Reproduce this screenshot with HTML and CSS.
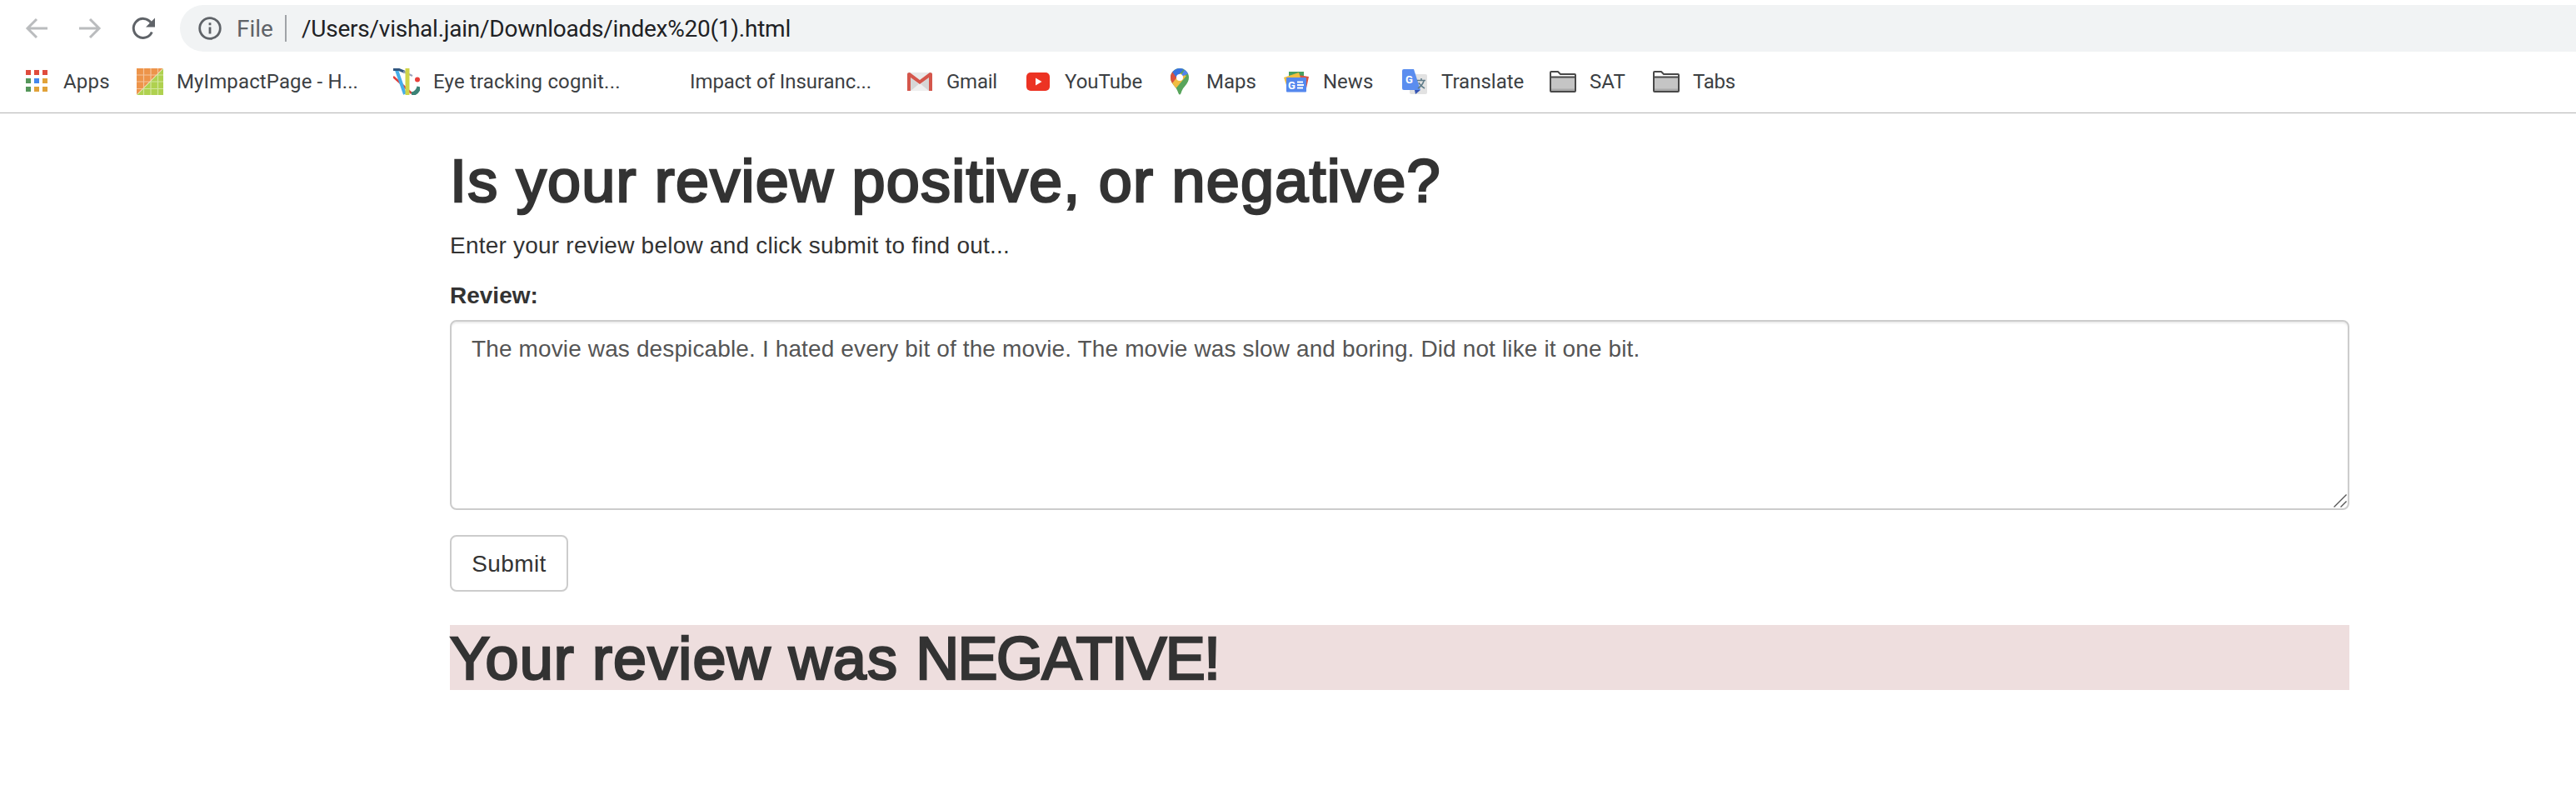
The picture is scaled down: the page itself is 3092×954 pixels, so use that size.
FILE: index.html
```html
<!DOCTYPE html>
<html lang="en">
<head>
<meta charset="utf-8">
<title>Review sentiment</title>
<link rel="stylesheet" href="styles.css">
</head>
<body>
<header class="browser">
  <div class="toolbar">
    <nav class="nav-icons">
      <svg class="nav-icon dim" viewBox="0 0 32 32"><path d="M29 16H5M16 5L5 16l11 11"/></svg>
      <svg class="nav-icon dim" viewBox="0 0 32 32"><path d="M3 16h24M16 5l11 11-11 11"/></svg>
      <svg class="nav-icon" viewBox="0 0 32 32"><path d="M26.300 20.500A11.500 11.500 0 1 1 25 9"/><path class="solid" d="M30 3.500v11H19z"/></svg>
    </nav>
    <div class="omnibox">
      <svg class="info" viewBox="0 0 28 28"><circle cx="14" cy="14" r="12.300"/><path d="M14 12.500v8M14 7.300v3"/></svg>
      <span class="scheme">File</span>
      <span class="divider"></span>
      <span class="url">/Users/vishal.jain/Downloads/index%20(1).html</span>
    </div>
  </div>
  <div class="bookmarks">
    <a class="bookmark"><svg class="icon" viewBox="0 0 32 32"><path fill="#df4b3d" d="M3 2h6v6H3zM13 2h6v6h-6zM23 2h6v6h-6z"/><path fill="#55965a" d="M3 12h6v6H3zM3 22h6v6H3z"/><path fill="#4387ed" d="M13 12h6v6h-6z"/><path fill="#e1a239" d="M23 12h6v6h-6zM13 22h6v6h-6zM23 22h6v6h-6z"/></svg><span class="label apps">Apps</span></a>
    <a class="bookmark"><svg class="icon" viewBox="0 0 32 32"><path fill="#ed944a" d="M0 0h32L0 32z"/><path fill="#afd14f" d="M32 0v32H0z"/><path stroke="#fff" stroke-opacity=".45" stroke-width="1.200" d="M8.500 0v32M17 0v32M25.500 0v32M0 8h32M0 16h32M0 24.500h32M32 0L0 32"/></svg><span class="label impact">MyImpactPage - H...</span></a>
    <a class="bookmark"><svg class="icon" viewBox="0 0 32 32" fill="none"><path stroke="#e03d38" stroke-width="2.500" d="M0 10l9 8 13 12"/><path stroke="#47aee8" stroke-width="4" d="M4 2l10 29"/><path stroke="#315780" stroke-width="3" d="M0 1.500h7l7 3"/><path stroke="#9aa3bb" stroke-width="2" d="M12 4l11 5"/><path stroke="#cfd448" stroke-width="5" d="M17 0v32"/><circle cx="29" cy="13.500" r="3" fill="#e8403a"/><path stroke="#3b8276" stroke-width="5" d="M22 31c5-1 8-4 9-9"/></svg><span class="label eye">Eye tracking cognit...</span></a>
    <a class="bookmark"><span class="icon"></span><span class="label insurance">Impact of Insuranc...</span></a>
    <a class="bookmark"><svg class="icon" viewBox="0 0 32 32"><rect x="1" y="5" width="30" height="22" rx="2" fill="#e9e9e9"/><path fill="#d6d6d6" d="M5 11l11 9 11-9v16H5z"/><path fill="#efefef" d="M5 27l11-9 11 9z"/><path fill="#d4564b" d="M1 7q0-2 3-2l12 9 12-9q3 0 3 2v20h-4V11l-11 8-11-8v16H1z"/></svg><span class="label gmail">Gmail</span></a>
    <a class="bookmark"><svg class="icon" viewBox="0 0 32 32"><rect x="2" y="5" width="28" height="22" rx="5" fill="#ec3323"/><path fill="#fff" d="M13 11.500v9l7.500-4.500z"/></svg><span class="label youtube">YouTube</span></a>
    <a class="bookmark"><svg class="icon" viewBox="0 0 32 32"><defs><clipPath id="pin"><path d="M16 0a11 11 0 0 1 11 11c0 8-7 10-9.500 19q-1.500 3-3 0C12 21 5 19 5 11A11 11 0 0 1 16 0z"/></clipPath></defs><g clip-path="url(#pin)"><path fill="#58a55c" d="M0 0h32v32H0z"/><path fill="#f1bd42" d="M0 17L12 4l12 5L9 27z"/><path fill="#d85140" d="M4 3h6l5 5-8 10H3z"/><path fill="#3873df" d="M7 4L14-1h9l-11 12z"/><path fill="#5383ec" d="M23 0l-7 11 11-5V0z"/></g><circle cx="16" cy="11" r="4" fill="#fff"/></svg><span class="label maps">Maps</span></a>
    <a class="bookmark"><svg class="icon" viewBox="0 0 32 32"><path fill="#479f5f" d="M7 4h18v10H7z"/><path fill="#d95140" d="M18 8l13 2-3 14-8-1z"/><path fill="#f1be42" d="M1 11l18-6 4 13-18 5z"/><rect x="4" y="11" width="24" height="17.500" rx="1" fill="#5588ee"/><text class="ge" x="6" y="24.500">G</text><path stroke="#fff" stroke-width="2" d="M17 16.500h7M17 20h8M17 23.500h7"/></svg><span class="label news">News</span></a>
    <a class="bookmark"><svg class="icon" viewBox="0 0 32 32"><rect x="10" y="7" width="21" height="24" rx="2" fill="#e2e2e2"/><path fill="#3454b4" d="M16 26h7l-6 5z"/><rect x="1" y="1" width="14" height="25" rx="2" fill="#5a8def"/><path fill="#5a8def" d="M8 1h7l8 25H8z"/><text class="tg" x="5" y="18">G</text><path fill="none" stroke="#607d8b" stroke-width="1.600" d="M19 14.500h10M24 12v2.500M27 15c-1 4-4 7-7 9M21 17c1 3 4 5 7 7"/></svg><span class="label translate">Translate</span></a>
    <a class="bookmark"><svg class="icon" viewBox="0 0 32 32"><path fill="#c5c5c5" d="M1 11h30v17H1z"/><path fill="#aaa" d="M1 24.500h30V27H1z"/><path fill="#fff" d="M1 4h10l3 3h17v4H1z"/><path fill="none" stroke="#484848" stroke-width="2" stroke-linejoin="round" d="M1 10.500h30M1 5q0-1 1-1h8l3 3h17q1 0 1 1v19q0 1-1 1H2q-1 0-1-1z"/></svg><span class="label sat">SAT</span></a>
    <a class="bookmark"><svg class="icon" viewBox="0 0 32 32"><path fill="#c5c5c5" d="M1 11h30v17H1z"/><path fill="#aaa" d="M1 24.500h30V27H1z"/><path fill="#fff" d="M1 4h10l3 3h17v4H1z"/><path fill="none" stroke="#484848" stroke-width="2" stroke-linejoin="round" d="M1 10.500h30M1 5q0-1 1-1h8l3 3h17q1 0 1 1v19q0 1-1 1H2q-1 0-1-1z"/></svg><span class="label tabs">Tabs</span></a>
  </div>
</header>
<main class="container">
  <h1 class="title">Is your review positive, or negative?</h1>
  <p class="intro">Enter your review below and click submit to find out...</p>
  <form>
    <label class="field-label" for="review">Review:</label>
    <div class="field">
      <textarea class="review" id="review" spellcheck="false">The movie was despicable. I hated every bit of the movie. The movie was slow and boring. Did not like it one bit.</textarea>
      <svg class="grip" viewBox="0 0 16 16"><path d="M.500 15.500l15-15M8.500 15.500l7-7"/></svg>
    </div>
    <button class="submit" type="button">Submit</button>
  </form>
  <h1 class="result">Your review was <span class="verdict">NEGATIVE!</span></h1>
</main>
</body>
</html>
```
FILE: styles.css
```css
* { box-sizing: border-box; }
body {
  margin: 0;
  background: #fff;
  color: #333;
  font: 28px/40px "Liberation Sans", Arial, sans-serif;
}
.browser {
  height: 136px;
  padding-top: 6px;
  border-bottom: 1px solid #b4b4b4;
  font-family: Roboto, sans-serif;
}
.toolbar { display: flex; height: 56px; }
.nav-icons {
  display: flex;
  align-items: center;
  gap: 32px;
  width: 216px;
  padding-left: 28px;
}
.nav-icon { width: 32px; height: 32px; fill: none; stroke: #5f6368; stroke-width: 3; }
.nav-icon.dim { stroke: #babcbe; }
.nav-icon .solid { fill: #5f6368; stroke: none; }
.omnibox {
  flex: 1;
  display: flex;
  align-items: center;
  padding-left: 22px;
  background: #f1f3f4;
  border-radius: 28px 0 0 28px;
  white-space: nowrap;
}
.info { width: 28px; height: 28px; fill: none; stroke: #5f6368; stroke-width: 2.8; }
.scheme { width: 58px; margin-left: 18px; color: #5f6368; }
.divider { width: 2px; height: 32px; margin-right: 18px; background: #a0a3a7; }
.url { color: #202124; letter-spacing: -.24px; }
.scheme, .url { padding-top: 1px; }
.bookmarks {
  display: grid;
  grid-template-columns: 136px 308px 308px 308px 142px 170px 140px 142px 178px 124px 124px;
  padding: 20px 0 0 28px;
}
.bookmark {
  display: flex;
  align-items: center;
  gap: 16px;
  height: 32px;
  color: #3c4043;
  font-size: 24px;
  line-height: 32px;
  white-space: nowrap;
}
.icon { flex: none; width: 32px; height: 32px; }
.apps { letter-spacing: .2px; }
.impact { letter-spacing: .12px; }
.eye { letter-spacing: .18px; }
.insurance { letter-spacing: -.06px; }
.gmail, .tabs { letter-spacing: -.25px; }
.ge, .tg { fill: #fff; font: bold 13px Roboto, sans-serif; }
.container { width: 2280px; margin-left: 540px; }
.title, .result {
  margin: 0;
  font-size: 72px;
  font-weight: 400;
  line-height: 78px;
  -webkit-text-stroke: 2.6px #333;
}
.title { padding-top: 42px; letter-spacing: 1.22px; }
.intro { margin: 19px 0 20px; letter-spacing: .22px; }
.field-label { display: block; margin-bottom: 9px; font-weight: 700; }
.field { position: relative; height: 228px; }
.review {
  display: block;
  width: 100%;
  height: 228px;
  padding: 13px 24px 11px;
  border: 2px solid #ccc;
  border-radius: 8px;
  box-shadow: inset 0 2px 2px rgba(0, 0, 0, .075);
  color: #555;
  font: inherit;
  letter-spacing: .13px;
  resize: none;
  outline: none;
}
.grip { position: absolute; right: 3px; bottom: 3px; width: 16px; height: 16px; stroke: #555; stroke-width: 1.4; }
.submit {
  display: block;
  width: 142px;
  height: 68px;
  margin: 30px 0 40px;
  padding: 2px 0 0;
  background: #fff;
  border: 2px solid #ccc;
  border-radius: 8px;
  color: #333;
  font: inherit;
  letter-spacing: .4px;
}
.result {
  padding-top: 2px;
  background: #eedede;
  letter-spacing: 1.1px;
  line-height: 76px;
}
.verdict { letter-spacing: -1.6px; }
```
